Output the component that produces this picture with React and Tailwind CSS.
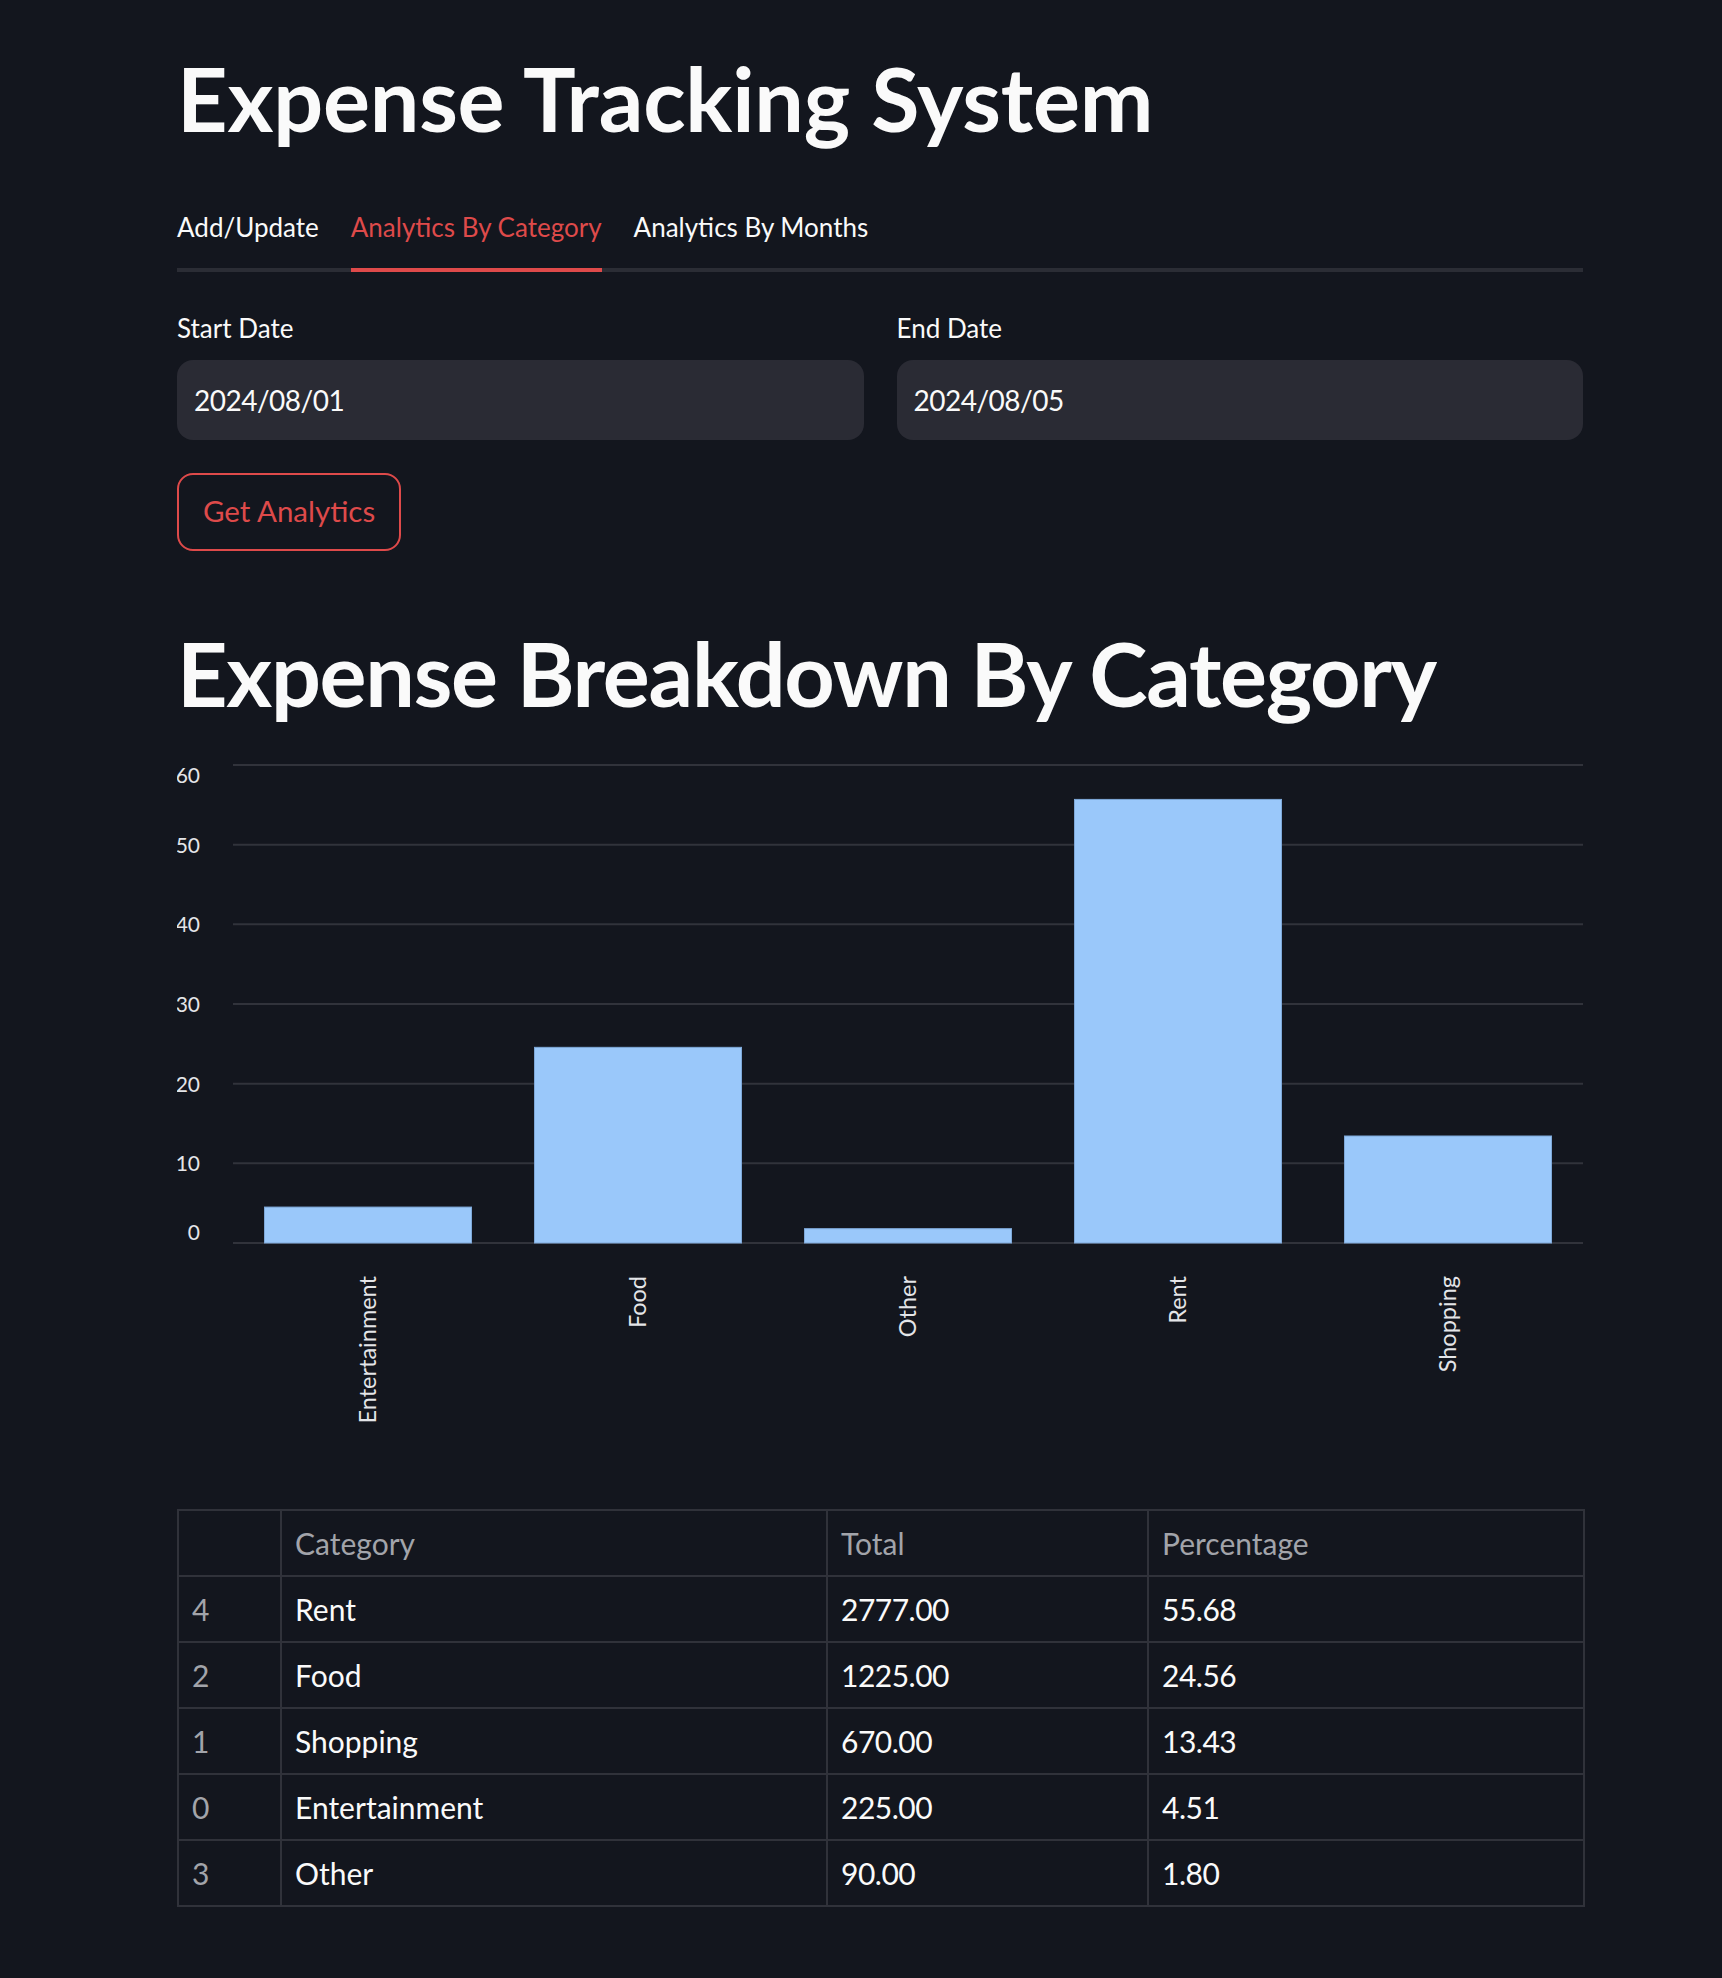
import React from "react";

const categories = [
  { name: "Entertainment", value: 4.51 },
  { name: "Food", value: 24.56 },
  { name: "Other", value: 1.8 },
  { name: "Rent", value: 55.68 },
  { name: "Shopping", value: 13.43 },
];

const rows = [
  { idx: 4, category: "Rent", total: "2777.00", pct: "55.68" },
  { idx: 2, category: "Food", total: "1225.00", pct: "24.56" },
  { idx: 1, category: "Shopping", total: "670.00", pct: "13.43" },
  { idx: 0, category: "Entertainment", total: "225.00", pct: "4.51" },
  { idx: 3, category: "Other", total: "90.00", pct: "1.80" },
];

function BarChart() {
  const plotLeft = 56;
  const plotRight = 1406;
  const band = (plotRight - plotLeft) / categories.length;
  const barW = 207;
  const top = 20;
  const zero = 498;
  const perUnit = (zero - top) / 60;
  const ticks = [60, 50, 40, 30, 20, 10, 0];

  return (
    <svg width="1406" height="690" className="block" style={{ fontFamily: "Lato, sans-serif" }}>
      {ticks.map((t) => {
        const y = zero - t * perUnit;
        let ty = y + 8;
        if (t === 60) ty = y + 18;
        if (t === 0) ty = y - 3;
        return (
          <g key={t}>
            <line x1={plotLeft} x2={plotRight} y1={y} y2={y} stroke="#31333b" strokeWidth="2" />
            <text x="23" y={ty} textAnchor="end" fontSize="21" fill="#e4e5e8">
              {t}
            </text>
          </g>
        );
      })}
      {categories.map((c, i) => {
        const cx = plotLeft + band * i + band / 2;
        const h = c.value * perUnit;
        return (
          <g key={c.name}>
            <rect x={cx - barW / 2} y={zero - h} width={barW} height={h} fill="#9ac8fa" stroke="#7ea8d8" strokeWidth="1" />
            <text
              transform={`translate(${cx + 8}, 531) rotate(-90)`}
              textAnchor="end"
              fontSize="23.5"
              fill="#e4e5e8"
            >
              {c.name}
            </text>
          </g>
        );
      })}
    </svg>
  );
}

export default function App() {
  return (
    <div className="min-h-[1978px] bg-[#13161e] text-[#fafafa]" style={{ fontFamily: "Lato, 'Noto Sans', sans-serif" }}>
      <div className="ml-[177px] w-[1406px] pt-[46px]">
        <h1 className="text-[88px] font-bold leading-[1.2] tracking-[-0.2px]">Expense Tracking System</h1>

        <div className="mt-[36px] flex gap-8 border-b-4 border-[#2b2d35]">
          <div className="h-[80px] flex items-center text-[26px]">Add/Update</div>
          <div className="h-[84px] -mb-[4px] flex items-center text-[26px] text-[#de4a4a] border-b-4 border-[#de4a4a]">
            Analytics By Category
          </div>
          <div className="h-[80px] flex items-center text-[26px]">Analytics By Months</div>
        </div>

        <div className="mt-[39px] grid grid-cols-2 gap-[33px]">
          <div>
            <div className="h-[34px] flex items-center text-[26px] leading-none">Start Date</div>
            <div className="mt-[15px] h-[80px] rounded-[16px] bg-[#2a2b34] flex items-center pl-[17px] text-[28px] tracking-[-0.5px]">
              2024/08/01
            </div>
          </div>
          <div>
            <div className="h-[34px] flex items-center text-[26px] leading-none">End Date</div>
            <div className="mt-[15px] h-[80px] rounded-[16px] bg-[#2a2b34] flex items-center pl-[17px] text-[28px] tracking-[-0.5px]">
              2024/08/05
            </div>
          </div>
        </div>

        <button className="mt-[33px] h-[78px] px-[24px] rounded-[16px] border-2 border-[#de4a4a] text-[#de4a4a] text-[29.5px] flex items-center">
          Get Analytics
        </button>

        <h2 className="mt-[70px] text-[88px] font-bold leading-[1.2] tracking-[-1.3px]">Expense Breakdown By Category</h2>

        <div className="mt-[19px]">
          <BarChart />
        </div>

        <table className="mt-[74px] w-[1406px] border-collapse text-[30px] table-fixed">
          <colgroup>
            <col className="w-[103px]" />
            <col className="w-[546px]" />
            <col className="w-[321px]" />
            <col className="w-[436px]" />
          </colgroup>
          <thead>
            <tr className="h-[66px]">
              <th className="border-2 border-[#30323a] px-[13px] text-left font-normal"></th>
              <th className="border-2 border-[#30323a] px-[13px] text-left font-normal text-[#a2a4aa]">Category</th>
              <th className="border-2 border-[#30323a] px-[13px] text-left font-normal text-[#a2a4aa]">Total</th>
              <th className="border-2 border-[#30323a] px-[13px] text-left font-normal text-[#a2a4aa]">Percentage</th>
            </tr>
          </thead>
          <tbody>
            {rows.map((r) => (
              <tr key={r.idx} className="h-[66px]">
                <td className="border-2 border-[#30323a] px-[13px] text-[#a2a4aa]">{r.idx}</td>
                <td className="border-2 border-[#30323a] px-[13px]">{r.category}</td>
                <td className="border-2 border-[#30323a] px-[13px] tracking-[-0.5px]">{r.total}</td>
                <td className="border-2 border-[#30323a] px-[13px] tracking-[-0.5px]">{r.pct}</td>
              </tr>
            ))}
          </tbody>
        </table>
      </div>
    </div>
  );
}
